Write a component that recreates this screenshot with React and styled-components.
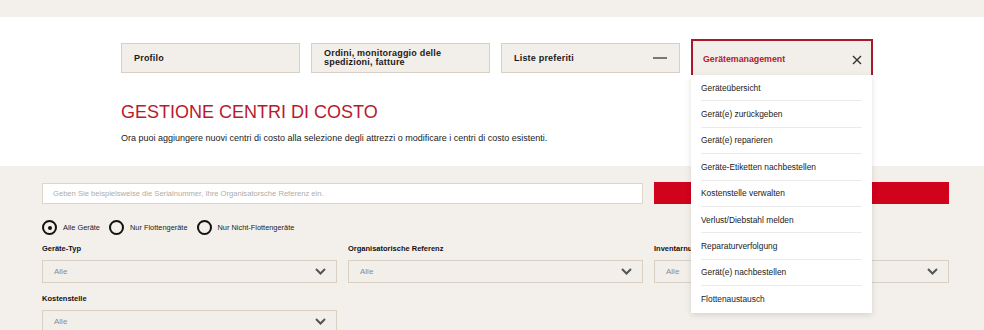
import styled, { createGlobalStyle } from "styled-components";

const GlobalStyle = createGlobalStyle`
  body {
    margin: 0;
    background: #f3f0eb;
    font-family: "Liberation Sans", Arial, sans-serif;
    color: #1a1a1a;
  }
`;

const TopBand = styled.div`
  height: 17px;
  background: #f3f0eb;
`;

const Hero = styled.section`
  background: #fff;
  padding: 22px 0 22px 121px;
`;

const TabRow = styled.div`
  display: grid;
  grid-template-columns: 179px 179px 179px 182px;
  column-gap: 11px;
  align-items: start;
`;

const Tab = styled.div`
  position: relative;
  box-sizing: border-box;
  height: ${(p) => (p.$active ? "36px" : "30px")};
  margin-top: ${(p) => (p.$active ? "0" : "4px")};
  background: #f2efea;
  border: 1px solid #d8d0c4;
  ${(p) =>
    p.$active &&
    `
    border: 2px solid #a8192c;
    border-bottom: none;
    padding-top: 3px;
    z-index: 5;
  `}
  display: flex;
  align-items: center;
  justify-content: space-between;
  padding-left: ${(p) => (p.$active ? "10px" : "12px")};
  padding-right: ${(p) => (p.$active ? "9px" : "12px")};
`;

const TabLabel = styled.span`
  font-size: ${(p) => (p.$active ? "8.8px" : "9px")};
  line-height: 9px;
  font-weight: 700;
  color: ${(p) => (p.$active ? "#b3192d" : "#1a1a1a")};
  letter-spacing: ${(p) => (p.$active ? "0" : "0.2px")};
`;

const Minus = styled.span`
  width: 14px;
  height: 2px;
  background: #777;
`;

const Dropdown = styled.ul`
  position: absolute;
  top: 100%;
  left: -2px;
  width: 181px;
  margin: 0;
  padding: 0;
  list-style: none;
  background: #fff;
  box-shadow: 0 2px 6px rgba(0, 0, 0, 0.12);
`;

const DropItem = styled.li`
  height: 26.4px;
  margin: 0 10px;
  display: flex;
  align-items: center;
  font-size: 8.4px;
  color: #222;
  border-bottom: 1px solid #ebebeb;
  box-sizing: border-box;
  &:last-child {
    border-bottom: none;
  }
`;

const Title = styled.h1`
  margin: 26px 0 0;
  font-size: 18px;
  line-height: 22px;
  font-weight: 400;
  color: #b81a2e;
`;

const Lead = styled.p`
  margin: 9px 0 0;
  font-size: 9px;
  line-height: 12px;
  color: #1a1a1a;
`;

const Filters = styled.section`
  padding: 16px 0 0 42px;
`;

const Grid = styled.div`
  display: grid;
  grid-template-columns: 295px 295px 295px;
  column-gap: 11px;
`;

const Search = styled.div`
  grid-column: span 2;
  box-sizing: border-box;
  height: 21px;
  margin-top: 1px;
  background: #fff;
  border: 1px solid #ddd5c9;
  display: flex;
  align-items: center;
  padding-left: 10px;
  font-size: 7.6px;
  color: #b0aca6;
`;

const SearchButton = styled.button`
  height: 22px;
  border: none;
  background: #d0021c;
`;

const RadioRow = styled.div`
  display: flex;
  align-items: center;
  gap: 9px;
  margin-top: 16px;
`;

const RadioOption = styled.label`
  display: flex;
  align-items: center;
  gap: 6px;
  font-size: 7.4px;
  color: #222;
`;

const RadioCircle = styled.span`
  box-sizing: border-box;
  width: 15px;
  height: 15px;
  border: 2px solid #111;
  border-radius: 50%;
  display: flex;
  align-items: center;
  justify-content: center;
  &::after {
    content: "";
    display: ${(p) => (p.$checked ? "block" : "none")};
    width: 4px;
    height: 4px;
    border-radius: 50%;
    background: #111;
  }
`;

const FieldGrid = styled(Grid)`
  margin-top: 8px;
  row-gap: 10px;
`;

const Field = styled.div`
  display: flex;
  flex-direction: column;
`;

const FieldLabel = styled.span`
  font-size: 7.5px;
  line-height: 12px;
  font-weight: 700;
  color: #111;
  margin-bottom: 5px;
`;

const Select = styled.div`
  box-sizing: border-box;
  height: 23px;
  background: #f2efea;
  border: 1px solid #d9d0c3;
  display: flex;
  align-items: center;
  justify-content: space-between;
  padding: 0 10px 0 11px;
  font-size: 8px;
  color: #8d8a86;
`;

const Chevron = () => (
  <svg width="11" height="7" viewBox="0 0 11 7">
    <path d="M1 1l4.5 4.5L10 1" fill="none" stroke="#555" strokeWidth="2" />
  </svg>
);

const CloseIcon = () => (
  <svg width="10" height="10" viewBox="0 0 10 10">
    <path d="M1 1l8 8M9 1l-8 8" fill="none" stroke="#333" strokeWidth="1.4" />
  </svg>
);

const menu = [
  "Geräteübersicht",
  "Gerät(e) zurückgeben",
  "Gerät(e) reparieren",
  "Geräte-Etiketten nachbestellen",
  "Kostenstelle verwalten",
  "Verlust/Diebstahl melden",
  "Reparaturverfolgung",
  "Gerät(e) nachbestellen",
  "Flottenaustausch",
];

const fields = [
  { label: "Geräte-Typ" },
  { label: "Organisatorische Referenz" },
  { label: "Inventarnummer" },
  { label: "Kostenstelle" },
];

export default function App() {
  return (
    <>
      <GlobalStyle />
      <TopBand />
      <Hero>
        <TabRow>
          <Tab>
            <TabLabel>Profilo</TabLabel>
          </Tab>
          <Tab>
            <TabLabel>
              Ordini, monitoraggio delle
              <br />
              spedizioni, fatture
            </TabLabel>
          </Tab>
          <Tab>
            <TabLabel>Liste preferiti</TabLabel>
            <Minus />
          </Tab>
          <Tab $active>
            <TabLabel $active>Gerätemanagement</TabLabel>
            <CloseIcon />
            <Dropdown>
              {menu.map((m) => (
                <DropItem key={m}>{m}</DropItem>
              ))}
            </Dropdown>
          </Tab>
        </TabRow>
        <Title>GESTIONE CENTRI DI COSTO</Title>
        <Lead>
          Ora puoi aggiungere nuovi centri di costo alla selezione degli attrezzi o modificare i centri di costo esistenti.
        </Lead>
      </Hero>
      <Filters>
        <Grid>
          <Search>Geben Sie beispielsweise die Serialnummer, Ihre Organisatorsche Referenz ein.</Search>
          <SearchButton />
        </Grid>
        <RadioRow>
          <RadioOption>
            <RadioCircle $checked />
            Alle Geräte
          </RadioOption>
          <RadioOption>
            <RadioCircle />
            Nur Flottengeräte
          </RadioOption>
          <RadioOption>
            <RadioCircle />
            Nur Nicht-Flottengeräte
          </RadioOption>
        </RadioRow>
        <FieldGrid>
          {fields.map((f) => (
            <Field key={f.label}>
              <FieldLabel>{f.label}</FieldLabel>
              <Select>
                Alle
                <Chevron />
              </Select>
            </Field>
          ))}
        </FieldGrid>
      </Filters>
    </>
  );
}
